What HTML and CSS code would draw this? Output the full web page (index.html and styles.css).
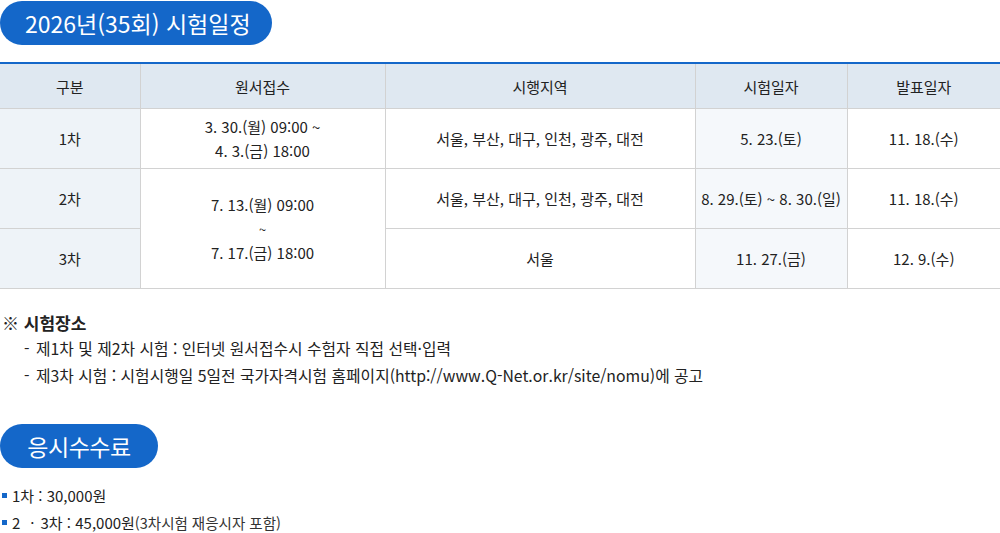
FILE: index.html
```html
<!DOCTYPE html>
<html lang="ko">
<head>
<meta charset="utf-8">
<link rel="stylesheet" href="styles.css">
</head>
<body>
<div class="page">
  <h2 class="pill pill-sched">2026년(35회) 시험일정</h2>
  <table class="sched">
    <colgroup>
      <col class="c1"><col class="c2"><col class="c3"><col class="c4"><col class="c5">
    </colgroup>
    <thead>
      <tr><th>구분</th><th>원서접수</th><th>시행지역</th><th>시험일자</th><th>발표일자</th></tr>
    </thead>
    <tbody>
      <tr>
        <td class="round">1차</td>
        <td class="twoline">3. 30.(월) 09:00 ~<br>4. 3.(금) 18:00</td>
        <td>서울, 부산, 대구, 인천, 광주, 대전</td>
        <td class="date">5. 23.(토)</td>
        <td>11. 18.(수)</td>
      </tr>
      <tr>
        <td class="round">2차</td>
        <td class="twoline" rowspan="2">7. 13.(월) 09:00<br><span class="tilde">~</span><br>7. 17.(금) 18:00</td>
        <td>서울, 부산, 대구, 인천, 광주, 대전</td>
        <td class="date">8. 29.(토) ~ 8. 30.(일)</td>
        <td>11. 18.(수)</td>
      </tr>
      <tr>
        <td class="round">3차</td>
        <td>서울</td>
        <td class="date">11. 27.(금)</td>
        <td>12. 9.(수)</td>
      </tr>
    </tbody>
  </table>

  <div class="note">
    <p class="note-title">※ 시험장소</p>
    <ul class="note-list">
      <li>제1차 및 제2차 시험 : 인터넷 원서접수시 수험자 직접 선택·입력</li>
      <li>제3차 시험 : 시험시행일 5일전 국가자격시험 홈페이지(http://www.Q-Net.or.kr/site/nomu)에 공고</li>
    </ul>
  </div>

  <h2 class="pill pill-fee">응시수수료</h2>
  <ul class="fee">
    <li>1차 : 30,000원</li>
    <li>2<span class="mid">·</span>3차 : 45,000원<span class="fee-sub">(3차시험 재응시자 포함)</span></li>
  </ul>
</div>
</body>
</html>
```

FILE: styles.css
```css
html, body {
  margin: 0;
  padding: 0;
  background: #fff;
}
body {
  font-family: "Noto Sans CJK KR", "Noto Sans", sans-serif;
  color: #222;
}
.page {
  width: 1000px;
  padding-top: 1px;
}
.pill {
  display: inline-block;
  margin: 0;
  background: #1467c9;
  color: #fff;
  font-weight: 400;
  font-size: 23px;
  line-height: 44px;
  height: 44px;
  border-radius: 22px;
  letter-spacing: -0.02em;
  box-sizing: border-box;
}
.pill-sched {
  width: 272px;
  padding-left: 25px;
  letter-spacing: 0;
}
.pill-fee {
  width: 158px;
  text-align: center;
  margin-top: 35px;
}
.sched {
  width: 1000px;
  margin-top: 17px;
  border-collapse: collapse;
  table-layout: fixed;
  border-top: 2px solid #1467c9;
  font-size: 15px;
  letter-spacing: 0;
}
.c1 { width: 140px; }
.c2 { width: 245px; }
.c3 { width: 310px; }
.c4 { width: 152px; }
.c5 { width: 153px; }
.sched th, .sched td {
  border: 1px solid #d2d2d2;
  text-align: center;
  vertical-align: middle;
  padding: 0;
  font-weight: 400;
}
.sched tr > :first-child { border-left: none; }
.sched tr > :last-child { border-right: none; }
.sched th {
  background: #dfe8f1;
  height: 44px;
  color: #222;
}
.sched td {
  height: 59px;
  line-height: 24px;
}
.sched td.round { background: #eef3f8; }
.sched td.date { background: #f5f8fb; }
.sched .twoline { line-height: 24px; }
.tilde {
  font-size: 13px;
  line-height: 22px;
}
.note {
  margin-top: 22px;
}
.note-title {
  margin: 0;
  font-size: 17px;
  font-weight: 700;
  letter-spacing: 0;
  line-height: 24px;
  padding-left: 2px;
}
.note-list {
  list-style: none;
  margin: 0;
  padding: 0 0 0 24px;
  font-size: 15.8px;
  letter-spacing: 0;
  line-height: 27px;
}
.note-list li::before {
  content: "-";
  display: inline-block;
  width: 12px;
}
.fee {
  list-style: none;
  margin: 14px 0 0;
  padding: 0 0 0 12px;
  font-size: 15px;
  letter-spacing: 0;
  line-height: 27px;
}
.fee li {
  position: relative;
}
.fee li::before {
  content: "";
  position: absolute;
  left: -10px;
  top: 11px;
  width: 5px;
  height: 5px;
  background: #1467c9;
}
.mid {
  margin: 0 6px 0 10px;
}
.fee-sub {
  font-size: 14.5px;
  color: #333;
}
```
